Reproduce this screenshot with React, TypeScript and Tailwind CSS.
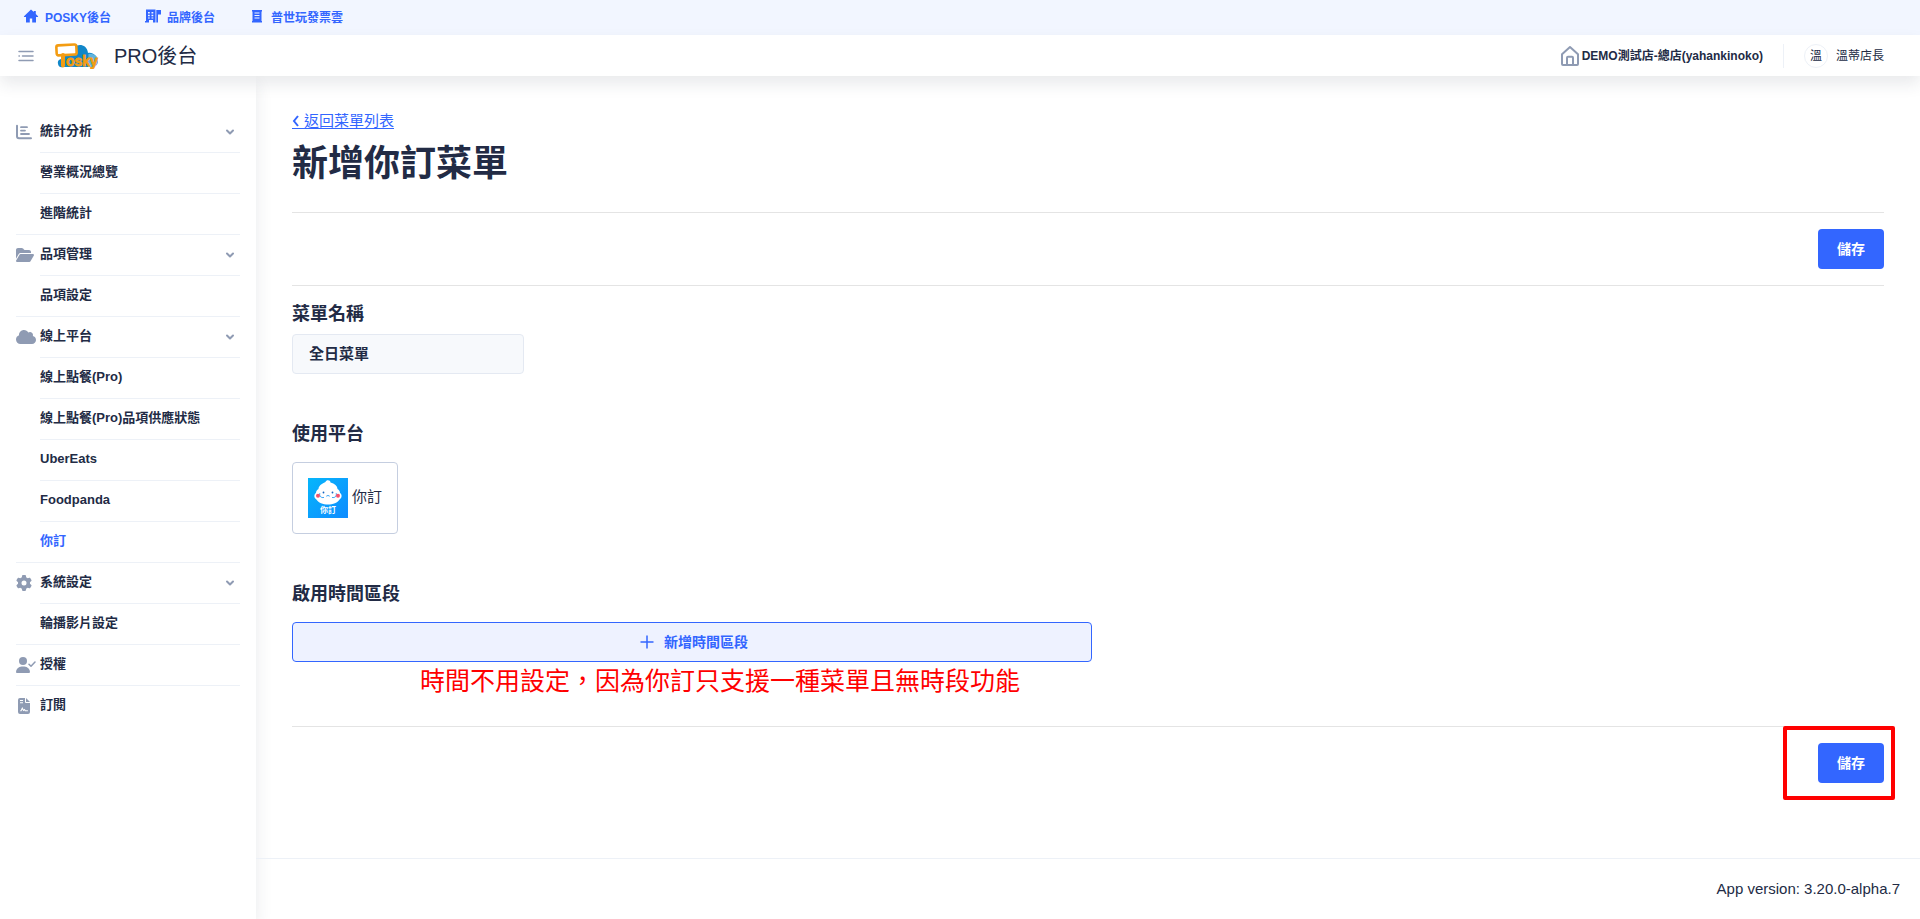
import type { ReactNode } from 'react'
import { FaCloud, FaFolderOpen, FaGear } from 'react-icons/fa6'
import { ChevronDown } from 'lucide-react'

type NavGroup = {
  label: string
  icon: ReactNode
  children?: string[]
}

function ChartIcon() {
  return (
    <svg viewBox="0 0 16 16" className="h-4 w-4" fill="none" stroke="currentColor" strokeWidth="2" strokeLinecap="round">
      <path d="M1 1.8v10.4a2 2 0 0 0 2 2h12" />
      <path d="M5 3.2h6M5 6.6h4M5 10h8" strokeWidth="1.8" />
    </svg>
  )
}

function UserCheckIcon() {
  return (
    <svg viewBox="0 0 20 16" className="h-4 w-5" fill="currentColor">
      <circle cx="7" cy="4" r="4" />
      <path d="M5.6 9.5h2.8A5.6 5.6 0 0 1 14 15.1c0 .5-.4.9-.9.9H.9a.9.9 0 0 1-.9-.9 5.6 5.6 0 0 1 5.6-5.6z" />
      <path d="M13 7.3l2 2 4-4.2" fill="none" stroke="currentColor" strokeWidth="1.5" strokeLinecap="round" strokeLinejoin="round" />
    </svg>
  )
}

function ContractIcon() {
  return (
    <svg viewBox="0 0 16 16" className="h-4 w-4">
      <path d="M4 0h5v4a1 1 0 0 0 1 1h4v9a2 2 0 0 1-2 2H4a2 2 0 0 1-2-2V2a2 2 0 0 1 2-2z" fill="currentColor" />
      <path d="M10 0l4 4h-4z" fill="currentColor" />
      <path d="M4 2.5h3M4 4.8h3M4.3 12.8h.8l1.2-2.6 1.2 2.2 1-.9.8 1.3h2.6" fill="none" stroke="#fff" strokeWidth="1.1" />
    </svg>
  )
}

function HomeIcon() {
  return (
    <svg viewBox="0 0 16 16" className="h-4 w-4" fill="currentColor">
      <path d="M8 1.500L1 8.200c-.3.400 0 .8.400.8H3v5.500h3.800V10.500h2.400v4H13V9h1.600c.5 0 .7-.4.400-.8L12.800 6V3h-2v1z" />
    </svg>
  )
}

function BuildingIcon() {
  return (
    <svg viewBox="0 0 16 16" className="h-4 w-4" fill="currentColor">
      <path
        fillRule="evenodd"
        d="M1 1.500h9.500v13H8V12H4v2.500H0v-1.500h1zM3 4v1.500h1.800V4zm3.500 0v1.500h1.800V4zM3 6.700v1.500h1.800V6.700zm3.500 0v1.500h1.800V6.700zM3 9.400v1.200h1.800V9.400zm3.500 0v1.200h1.800V9.400z"
      />
      <path d="M11.300 2H16v4.500h-3v8h-1.700z" />
    </svg>
  )
}

function ReceiptIcon() {
  return (
    <svg viewBox="0 0 16 16" className="h-4 w-4" fill="currentColor">
      <path
        fillRule="evenodd"
        d="M3 2h10v1.500h-.5v9.500h.5v1.500H3V13h.5V3.500H3zM5.500 4.500v1h5v-1zm0 2.500v1h5V7zm0 2.500v1h5v-1z"
      />
    </svg>
  )
}

function StoreIcon() {
  return (
    <svg viewBox="0 0 20 22" className="h-[22px] w-5" fill="none" stroke="currentColor" strokeWidth="2" strokeLinejoin="round">
      <path d="M2 9.300L10 2l8 7.300V19a1 1 0 0 1-1 1H3a1 1 0 0 1-1-1z" />
      <path d="M7 20v-7.200a1 1 0 0 1 1-1h4a1 1 0 0 1 1 1V20" />
    </svg>
  )
}

function MenuIcon() {
  return (
    <svg viewBox="0 0 16 12" className="h-3 w-4" fill="none" stroke="currentColor" strokeWidth="1.5" strokeLinecap="round">
      <path d="M1 1.500h14M4.500 6H15M1 10.500h14M1 6h.4" />
    </svg>
  )
}

function PoskyLogo() {
  return (
    <svg viewBox="0 0 44 26" className="h-[26px] w-11" role="img" aria-label="Posky">
      <path d="M8 24a4 4 0 0 1-2-8L20 4c3-3.500 12-3 13 6 5-1 9.500 3 9.500 8 0 4-3 6-6 6z" fill="#1187c9" />
      <path d="M33.500 11c5-1 9.500 2 9.500 7 0 4-3 6-6 6h-4z" fill="#5fb4de" />
      <rect x="1.500" y="2" width="20" height="10" rx="2" fill="#fff" stroke="#f39c12" strokeWidth="2.600" transform="rotate(-3 11 7)" />
      <path d="M8 12v10.500" stroke="#f39c12" strokeWidth="4" strokeLinecap="round" />
      <text x="11" y="22.500" fontSize="14" fontWeight="700" fill="#f39c12" stroke="#f39c12" strokeWidth="0.800" fontFamily="Liberation Sans, sans-serif">
        osky
      </text>
    </svg>
  )
}

function NidinLogo() {
  return (
    <svg viewBox="0 0 40 40" className="h-10 w-10" role="img" aria-label="你訂">
      <defs>
        <linearGradient id="nidin" x1="0" y1="0" x2="1" y2="1">
          <stop offset="0" stopColor="#06b6fb" />
          <stop offset="1" stopColor="#0f8bff" />
        </linearGradient>
      </defs>
      <rect width="40" height="40" fill="url(#nidin)" />
      <path
        d="M17.500 4c.5-2.500 5-2.500 5 .5 4 1 7 3.500 7 6.500 1.600 1 2.500 2.200 2.500 4 2.200 1.300 2.200 4.700 0 6-2.300 3.800-7 5.500-12 5.500S10.300 24.800 8 21c-2.200-1.300-2.200-4.700 0-6 0-1.800.9-3 2.500-4 0-3 3-5 7-7z"
        fill="#fff"
      />
      <path d="M11.800 15.200c-.8 3 1.500 5 4.200 4.200M28.200 15.200c.8 3-1.500 5-4.200 4.200M18.300 18.200q1.700-1.500 3.400 0" fill="none" stroke="#2196f3" strokeWidth="0.900" />
      <circle cx="15.500" cy="14.500" r="0.900" fill="#1565c0" />
      <circle cx="24.500" cy="14.500" r="0.900" fill="#1565c0" />
      <circle cx="10" cy="17.800" r="2" fill="#f5516c" />
      <circle cx="30" cy="17.800" r="2" fill="#f5516c" />
      <text x="20" y="35" textAnchor="middle" fontSize="8" fontWeight="700" fill="#fff" fontFamily="Noto Sans CJK TC, sans-serif">
        你訂
      </text>
    </svg>
  )
}

const topLinks = [
  { label: 'POSKY後台', icon: <HomeIcon /> },
  { label: '品牌後台', icon: <BuildingIcon /> },
  { label: '普世玩發票雲', icon: <ReceiptIcon /> },
]

const navGroups: NavGroup[] = [
  { label: '統計分析', icon: <ChartIcon />, children: ['營業概況總覽', '進階統計'] },
  { label: '品項管理', icon: <FaFolderOpen className="h-4 w-[18px]" />, children: ['品項設定'] },
  {
    label: '線上平台',
    icon: <FaCloud className="h-4 w-5" />,
    children: ['線上點餐(Pro)', '線上點餐(Pro)品項供應狀態', 'UberEats', 'Foodpanda', '你訂'],
  },
  { label: '系統設定', icon: <FaGear className="h-4 w-4" />, children: ['輪播影片設定'] },
  { label: '授權', icon: <UserCheckIcon /> },
  { label: '訂閱', icon: <ContractIcon /> },
]

const activeItem = '你訂'

function SaveButton() {
  return (
    <button type="button" className="h-10 w-[66px] rounded bg-[#3366ff] text-sm font-bold text-white">
      儲存
    </button>
  )
}

function Sidebar() {
  return (
    <aside className="w-64 shrink-0 bg-white px-4 pt-9 shadow-[0_8px_16px_0_rgba(44,51,73,0.1)]">
      <nav className="text-[13px] font-bold">
        <ul>
          {navGroups.map((group) => (
            <li key={group.label} className="border-b border-[#edf1f7] last:border-b-0">
              <a href="#" className="flex h-10 items-center">
                <span className="flex w-6 text-[#8f9bb3]">{group.icon}</span>
                <span className="grow pb-0.5">{group.label}</span>
                {group.children ? <ChevronDown className="mr-1 h-3 w-3 text-[#8f9bb3]" strokeWidth={4} /> : null}
              </a>
              {group.children ? (
                <ul className="pl-6">
                  {group.children.map((item) => (
                    <li key={item} className="border-t border-[#edf1f7]">
                      <a
                        href="#"
                        className={
                          item === activeItem ? 'flex h-10 items-center pb-0.5 text-[#3366ff]' : 'flex h-10 items-center pb-0.5'
                        }
                      >
                        {item}
                      </a>
                    </li>
                  ))}
                </ul>
              ) : null}
            </li>
          ))}
        </ul>
      </nav>
    </aside>
  )
}

export default function App() {
  return (
    <div className="flex min-h-screen flex-col bg-white font-['Liberation_Sans','Noto_Sans_CJK_TC',sans-serif] text-[#222b45]">
      <nav className="flex h-[35px] items-center gap-[34px] bg-[#f2f6ff] px-[23px] text-xs font-bold text-[#3366ff]">
        {topLinks.map((link) => (
          <a key={link.label} href="#" className="flex items-center gap-1.5">
            <span className="pb-1">{link.icon}</span>
            {link.label}
          </a>
        ))}
      </nav>

      <header className="relative z-10 flex h-[41px] items-center justify-between bg-white pr-9 pl-[18px] shadow-[0_8px_16px_0_rgba(44,51,73,0.1)]">
        <div className="flex items-center">
          <button type="button" aria-label="選單" className="text-[#8f9bb3]">
            <MenuIcon />
          </button>
          <a href="#" className="ml-[21px] flex items-center gap-[15px] text-xl">
            <PoskyLogo />
            PRO後台
          </a>
        </div>
        <div className="flex items-center text-xs">
          <span className="text-[#8f9bb3]">
            <StoreIcon />
          </span>
          <span className="ml-0.5 font-bold">DEMO測試店-總店(yahankinoko)</span>
          <span className="ml-5 h-6 border-l border-[#edf1f7]" />
          <span className="ml-5 flex h-6 w-6 items-center justify-center rounded-full border border-[#edf1f7]">溫</span>
          <span className="ml-2">溫蒂店長</span>
        </div>
      </header>

      <div className="flex grow">
        <Sidebar />

        <div className="flex min-w-0 grow flex-col">
          <main className="grow px-9 pt-[38px] pb-8">
            <a
              href="#"
              className="flex w-fit items-center border-b border-[#3366ff] text-[15px] leading-[14px] text-[#3366ff]"
            >
              <svg viewBox="0 0 8 12" className="mr-1 h-3 w-2" fill="none" stroke="currentColor" strokeWidth="2">
                <path d="M6 1L2 6l4 5" />
              </svg>
              返回菜單列表
            </a>
            <h1 className="mt-[11px] text-4xl leading-[48px] font-bold">新增你訂菜單</h1>

            <div className="mt-6 flex justify-end border-y border-[#e4e4e4] py-4">
              <SaveButton />
            </div>

            <label htmlFor="menu-name" className="mt-4 block text-lg leading-6 font-bold">
              菜單名稱
            </label>
            <input
              id="menu-name"
              type="text"
              defaultValue="全日菜單"
              className="mt-2 block h-10 w-[232px] rounded border border-[#e4e9f2] bg-[#f7f9fc] px-4 pb-1 text-[15px] font-bold"
            />

            <h2 className="mt-12 text-lg leading-6 font-bold">使用平台</h2>
            <button
              type="button"
              className="mt-4 flex h-[72px] w-[106px] items-center gap-1 rounded border border-[#c5cee0] px-[15px] text-[15px]"
            >
              <NidinLogo />
              <span className="pb-0.5">你訂</span>
            </button>

            <h2 className="mt-12 text-lg leading-6 font-bold">啟用時間區段</h2>
            <button
              type="button"
              className="mt-4 flex h-10 w-full max-w-[800px] items-center justify-center gap-2.5 rounded border border-[#3366ff] bg-[#eef2ff] pl-4 pr-3 text-sm font-bold text-[#3366ff]"
            >
              <svg viewBox="0 0 14 14" className="h-3.5 w-3.5" stroke="currentColor" strokeWidth="1.500">
                <path d="M7 0.500v13M0.500 7h13" />
              </svg>
              新增時間區段
            </button>
            <p className="pl-32 text-[25px] leading-[38px] text-[#ff0000]">時間不用設定，因為你訂只支援一種菜單且無時段功能</p>

            <div className="mt-[26px] flex justify-end border-t border-[#e4e4e4] pt-4">
              <div className="relative">
                <SaveButton />
                <span className="pointer-events-none absolute -top-[17px] -right-[11px] -bottom-[17px] -left-[35px] rounded-xs border-4 border-[#ff0000]" />
              </div>
            </div>
          </main>

          <footer className="flex h-[61px] items-center justify-end border-t border-[#edf1f7] px-5 text-[15px]">
            App version: 3.20.0-alpha.7
          </footer>
        </div>
      </div>
    </div>
  )
}
